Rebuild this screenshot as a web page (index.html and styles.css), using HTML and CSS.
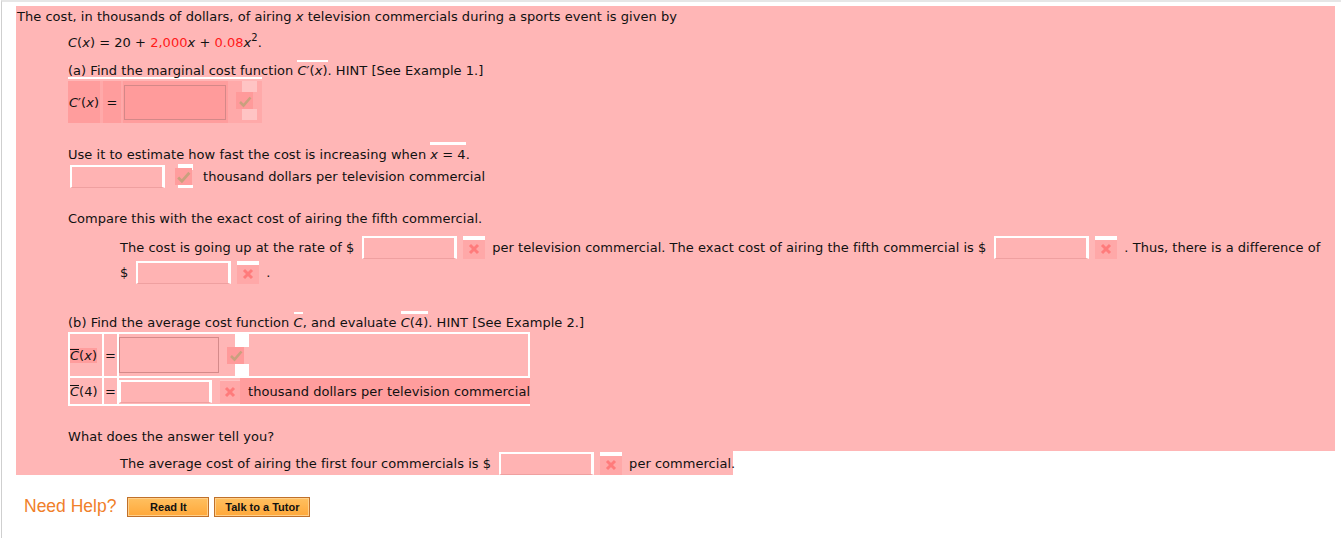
FILE: index.html
```html
<!DOCTYPE html>
<html>
<head>
<meta charset="utf-8">
<link rel="stylesheet" href="styles.css">
</head>
<body>
<div class="page">
  <div class="question">
    <p class="intro">The cost, in thousands of dollars, of airing <i>x</i> television commercials during a sports event is given by</p>
    <div class="indent">
      <p class="formula"><i>C</i>(<i>x</i>) = 20 + <span class="red">2,000</span><i>x</i> + <span class="red">0.08</span><i>x</i><sup>2</sup>.</p>
      <p class="parta">(a) Find the marginal cost function <span class="ob"><i>C</i>′(<i>x</i>)</span>. HINT [See Example 1.]</p>
      <div class="cwrap">
        <div class="cprime">
          <div class="cell lbl"><i>C</i>′(<i>x</i>)</div>
          <div class="cell eq">=</div>
          <div class="cell inp"><span class="box dark"></span></div>
          <div class="cell ico">
            <span class="wsq"></span>
            <span class="mark dk"><svg viewBox="0 0 16 16" width="16" height="16"><path d="M3 9 L6.5 12.5 L13.5 4.5" fill="none" stroke="#c9a07e" stroke-width="2.6"/></svg></span>
            <span class="wsq"></span>
          </div>
        </div>
      </div>

      <p class="use">Use it to estimate how fast the cost is increasing when <span class="ob2"><i>x</i> = 4</span>.</p>
      <div class="row r1">
        <span class="box lite"></span>
        <span class="mark sm"><span class="mk-top"></span><svg viewBox="0 0 16 16" width="16" height="16"><path d="M3 9 L6.5 12.5 L13.5 4.5" fill="none" stroke="#c9a07e" stroke-width="2.6"/></svg><span class="mk-bot"></span></span>
        <span class="after">thousand dollars per television commercial</span>
      </div>

      <p class="compare">Compare this with the exact cost of airing the fifth commercial.</p>
      <div class="sub">
        <div class="row r2">
          <span>The cost is going up at the rate of $</span>
          <span class="box lite"></span>
          <span class="xmark"><svg viewBox="0 0 14 14" width="14" height="14"><path d="M3 3 L11 11 M11 3 L3 11" stroke="#ff7b7b" stroke-width="3"/></svg></span>
          <span>per television commercial. The exact cost of airing the fifth commercial is $</span>
          <span class="box lite"></span>
          <span class="xmark"><svg viewBox="0 0 14 14" width="14" height="14"><path d="M3 3 L11 11 M11 3 L3 11" stroke="#ff7b7b" stroke-width="3"/></svg></span>
          <span>. Thus, there is a difference of</span>
        </div>
        <div class="row r3">
          <span>$</span>
          <span class="box lite"></span>
          <span class="xmark"><svg viewBox="0 0 14 14" width="14" height="14"><path d="M3 3 L11 11 M11 3 L3 11" stroke="#ff7b7b" stroke-width="3"/></svg></span>
          <span>.</span>
        </div>
      </div>

      <p class="partb">(b) Find the average cost function <span class="ob"><i>C</i></span>, and evaluate <span class="ob3"><i>C</i>(4)</span>. HINT [See Example 2.]</p>
      <div class="tbl">
        <div class="trow tr1">
          <div class="tc tlbl"><span class="hl"><span class="bar"><i>C</i></span>(<i>x</i>)</span></div>
          <div class="tc teq">=</div>
          <div class="tc tmain">
            <span class="box mid"></span>
            <span class="chk2">
              <span class="wsq2"></span>
              <span class="mark dk sm2"><svg viewBox="0 0 16 16" width="16" height="16"><path d="M3 9 L6.5 12.5 L13.5 4.5" fill="none" stroke="#c9a07e" stroke-width="2.6"/></svg></span>
              <span class="wsq2"></span>
            </span>
          </div>
        </div>
        <div class="trow tr2">
          <div class="tc tlbl"><span class="bar"><i>C</i></span>(4)</div>
          <div class="tc teq">=</div>
          <div class="tc tmain">
            <span class="box lite b2"></span>
            <span class="xmark x2"><svg viewBox="0 0 14 14" width="14" height="14"><path d="M3 3 L11 11 M11 3 L3 11" stroke="#ff7b7b" stroke-width="3"/></svg></span>
            <span class="unit">thousand dollars per television commercial</span>
          </div>
        </div>
      </div>

      <p class="what">What does the answer tell you?</p>
    </div>
  </div>
  <div class="lastline">
    <span>The average cost of airing the first four commercials is $</span>
    <span class="box lite"></span>
    <span class="xmark"><svg viewBox="0 0 14 14" width="14" height="14"><path d="M3 3 L11 11 M11 3 L3 11" stroke="#ff7b7b" stroke-width="3"/></svg></span>
    <span>per commercial.</span>
  </div>

  <div class="help">
    <span class="need">Need Help?</span>
    <button class="btn b-read">Read It</button>
    <button class="btn b-tutor">Talk to a Tutor</button>
  </div>
</div>
</body>
</html>
```

FILE: styles.css
```css
html, body {
  margin: 0;
  padding: 0;
  background: #fff;
}
body {
  font-family: "DejaVu Sans", Verdana, sans-serif;
  font-size: 13px;
  letter-spacing: 0.03px;
  color: #111;
  width: 1341px;
  height: 538px;
  overflow: hidden;
}
.page {
  margin-left: 1px;
  border-left: 1px solid #cfcfcf;
  border-top: 2px solid #e6e6e6;
  padding: 4px 6px 0 14px;
  height: 538px;
  box-sizing: border-box;
}
.question {
  background: #ffb6b6;
  padding: 3px 0 1px 1px;
}
p { margin: 0; }
.intro { line-height: 16px; }
.indent { padding-left: 51px; }
.formula { margin-top: 10px; line-height: 16px; }
.red { color: #ff1a1a; }
sup { font-size: 10px; line-height: 0; vertical-align: 6px; }
.parta { margin-top: 12px; line-height: 16px; }
.ob { border-top: 2px solid #fff; padding-top: 1px; }
.ob2 { border-top: 3px solid #fff; padding-top: 2px; }
.ob3 { border-top: 3px solid #fff; padding-top: 1px; }

.cwrap {
  width: 194px;
  border-top: 2px solid #fff;
  padding-top: 2px;
  margin-top: -2px;
}
.cprime {
  display: flex;
  height: 42px;
  background: #ffa9a9;
}
.cell { display: flex; align-items: center; background: #ff9d9d; }
.lbl { width: 32px; padding-left: 1px; box-sizing: border-box; }
.eq { width: 19px; margin-left: 3px; justify-content: center; }
.inp { width: 106px; margin-left: 2px; padding-left: 1px; box-sizing: border-box; }
.ico { width: 26px; margin-left: 8px; flex-direction: column; align-items: flex-start; background: transparent; }
.wsq { width: 15px; height: 11px; background: #ffc4c4; margin-left: 6px; }
.mark { display: inline-flex; align-items: center; justify-content: center; }
.mark.dk { width: 17px; height: 17px; background: #ff9a9a; }
.box { display: inline-block; box-sizing: border-box; flex: none; }
.box.dark { width: 102px; height: 35px; border: 1px solid #d48888; background: #ff9b9b; }

.use { margin-top: 24px; line-height: 16px; }
.row { display: flex; align-items: center; white-space: nowrap; }
.r1 { margin-top: 1px; height: 24px; }
.box.lite {
  width: 95px; height: 23px;
  border-top: 2px solid #fff; border-left: 2px solid #fff; border-right: 3px solid #fff;
  border-bottom: 1px solid #efa0a0;
  background: #ffb3b3;
}
.r1 .box.lite { margin-left: 2px; }
.mark.sm { position: relative; width: 22px; height: 24px; margin-left: 7px; }
.mark.sm svg { position: relative; background: #ff9d9d; width: 17px; height: 17px; }
.mk-top { position: absolute; top: 0; right: 1px; width: 15px; height: 6px; background: #fff; }
.mk-bot { position: absolute; bottom: 0; right: 1px; width: 15px; height: 3px; background: #fff; }
.after { margin-left: 9px; }

.compare { margin-top: 23px; line-height: 16px; }
.sub { padding-left: 52px; margin-top: 8px; }
.r2 { height: 24px; }
.r2 .box.lite, .r3 .box.lite, .lastline .box.lite { margin-left: 8px; }
.xmark {
  display: inline-flex; align-items: center; justify-content: center;
  flex: none;
  width: 22px; height: 23px; margin-left: 6px; margin-right: 7px;
  background: #ffa8a8;
  border-top: 4px solid #fff;
  box-sizing: border-box;
}
.r3 { height: 24px; margin-top: 1px; }

.partb { margin-top: 31px; line-height: 16px; }
.tbl {
  width: 462px;
  margin-top: 1px;
  border: 2px solid #fff;
  box-sizing: border-box;
  display: flex;
  flex-direction: column;
  gap: 2px;
  background: #fff;
}
.trow { display: flex; gap: 2px; background: #fff; }
.tc { background: #ffb6b6; display: flex; align-items: center; white-space: nowrap; }
.tr1 { height: 42px; }
.tr2 { height: 26px; }
.tlbl { width: 32px; flex: none; }
.hl { background: #ff9d9d; }
.bar { border-top: 1px solid #111; padding-top: 0; line-height: 12px; display: inline-block; }
.teq { width: 13px; flex: none; justify-content: center; }
.tmain { flex: 1; min-width: 0; }
.box.mid { width: 100px; height: 36px; border: 1px solid #d48a8a; background: #ffb3b3; }
.chk2 { display: flex; flex-direction: column; margin-left: 8px; }
.wsq2 { width: 14px; height: 14px; background: #fff; margin-left: 8px; }
.sm2 { width: 18px; height: 14px; }
.box.b2 { width: 93px; border-right: 3px solid #fff; }
.x2 { margin-left: 8px; margin-right: 0; border-top: 1px solid #ffc4c4; width: 20px; }
.unit { background: #ff9d9d; flex: 1; align-self: stretch; display: flex; align-items: center; padding-left: 8px; }

.what { margin-top: 23px; line-height: 16px; padding-bottom: 5px; }

.lastline {
  width: 613px;
  background: #ffb6b6;
  padding-left: 104px;
  display: flex;
  align-items: center;
  white-space: nowrap;
  height: 24px;
}

.help {
  display: flex;
  align-items: center;
  margin-top: 21px;
  padding-left: 8px;
}
.need {
  font-family: "Liberation Sans", Arial, sans-serif;
  font-size: 17.5px;
  letter-spacing: 0;
  color: #f0802a;
  margin-right: 11px;
}
.btn {
  font-family: "Liberation Sans", Arial, sans-serif;
  font-weight: bold;
  font-size: 11px;
  letter-spacing: 0;
  color: #111;
  height: 20px;
  padding: 0;
  border: 1px solid #c0702a;
  box-shadow: inset 0 0 0 1px #ffd08a;
  background: linear-gradient(#ffc060, #ffa83a);
  margin-right: 5px;
}
.b-read { width: 82px; }
.b-tutor { width: 96px; }
```
